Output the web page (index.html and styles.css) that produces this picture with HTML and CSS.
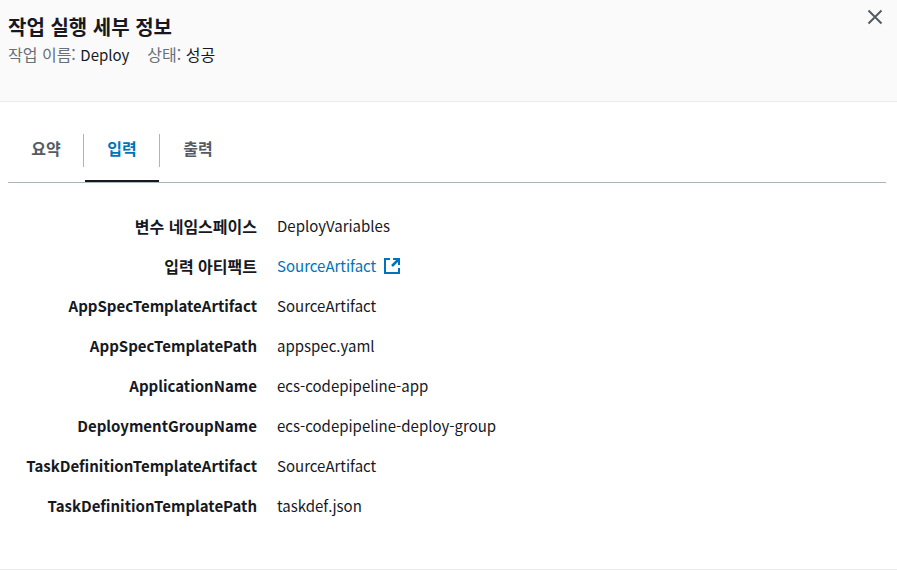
FILE: index.html
```html
<!DOCTYPE html>
<html lang="ko">
<head>
<meta charset="utf-8">
<title>작업 실행 세부 정보</title>
<link rel="stylesheet" href="styles.css">
</head>
<body>
<section class="dialog">
  <header class="dialog-header">
    <div>
      <h1 class="title">작업 실행 세부 정보</h1>
      <p class="meta"><span>작업 이름: <b class="latin">Deploy</b></span><span>상태: <b>성공</b></span></p>
    </div>
    <button class="close" type="button" aria-label="닫기">
      <svg width="16" height="16" viewBox="0 0 16 16" fill="none" stroke="currentColor" stroke-width="2" aria-hidden="true"><path d="M1.5 1.5l13 13M14.5 1.5l-13 13"/></svg>
    </button>
  </header>
  <main class="content">
    <div class="tabs" role="tablist">
      <button class="tab" type="button" role="tab" aria-selected="false">요약</button>
      <button class="tab" type="button" role="tab" aria-selected="true">입력</button>
      <button class="tab" type="button" role="tab" aria-selected="false">출력</button>
    </div>
    <dl class="details">
      <dt>변수 네임스페이스</dt><dd class="latin">DeployVariables</dd>
      <dt>입력 아티팩트</dt>
      <dd class="latin"><a class="link" href="#">SourceArtifact<svg width="16" height="16" viewBox="0 0 16 16" fill="none" stroke="currentColor" stroke-width="2" aria-hidden="true"><path d="M6 1H1v14h14v-5M9 1h6v6"/><path d="M15 1L8 8" stroke-width="2.5"/></svg></a></dd>
      <dt class="latin">AppSpecTemplateArtifact</dt><dd class="latin">SourceArtifact</dd>
      <dt class="latin">AppSpecTemplatePath</dt><dd class="latin">appspec.yaml</dd>
      <dt class="latin">ApplicationName</dt><dd class="latin">ecs-codepipeline-app</dd>
      <dt class="latin">DeploymentGroupName</dt><dd class="latin">ecs-codepipeline-deploy-group</dd>
      <dt class="latin">TaskDefinitionTemplateArtifact</dt><dd class="latin">SourceArtifact</dd>
      <dt class="latin">TaskDefinitionTemplatePath</dt><dd class="latin">taskdef.json</dd>
    </dl>
  </main>
</section>
</body>
</html>
```
FILE: styles.css
```css
* {
  box-sizing: border-box;
}

body {
  margin: 0;
  background: #fff;
  color: #16191f;
  font-family: "Noto Sans CJK KR", "Noto Sans", sans-serif;
  font-size: 16px;
  line-height: 24px;
}

.latin {
  font-size: 15px;
}

.dialog {
  border-bottom: 1px solid #eaeded;
}

.dialog-header {
  display: flex;
  justify-content: space-between;
  align-items: flex-start;
  padding: 12px 14px 34px 8px;
  background: #fafafa;
  border-bottom: 1px solid #eaeded;
}

.title {
  margin: 0;
  font-size: 20px;
  font-weight: 700;
  line-height: 30px;
}

.meta {
  display: flex;
  gap: 18px;
  margin: 0;
  line-height: 25px;
  color: #687078;
}

.meta b {
  font-weight: 400;
  color: #16191f;
}

.close {
  display: flex;
  padding: 0;
  margin-top: -3px;
  border: 0;
  background: none;
  color: #545b64;
}

.content {
  padding: 32px 11px 42px 8px;
}

.tabs {
  display: flex;
  border-bottom: 1px solid #aab7b8;
}

.tab {
  position: relative;
  width: 76px;
  height: 48px;
  padding: 0 0 20px;
  border: 0;
  background: none;
  color: #545b64;
  font: inherit;
  font-weight: 700;
}

.tab + .tab::before {
  content: "";
  position: absolute;
  top: 0;
  left: -1px;
  width: 1px;
  height: 33px;
  background: #aab7b8;
}

.tab[aria-selected="true"] {
  color: #0073bb;
}

.tab[aria-selected="true"]::after {
  content: "";
  position: absolute;
  right: 1px;
  bottom: 0;
  left: 1px;
  height: 2px;
  background: #16191f;
}

.details {
  display: grid;
  grid-template-columns: 249px 1fr;
  gap: 16px 20px;
  margin: 31px 0 9px;
}

.details dt {
  font-weight: 700;
  text-align: right;
}

.details dd {
  margin: 0;
}

.link {
  display: inline-flex;
  align-items: center;
  gap: 8px;
  color: #0073bb;
  text-decoration: none;
}
```
